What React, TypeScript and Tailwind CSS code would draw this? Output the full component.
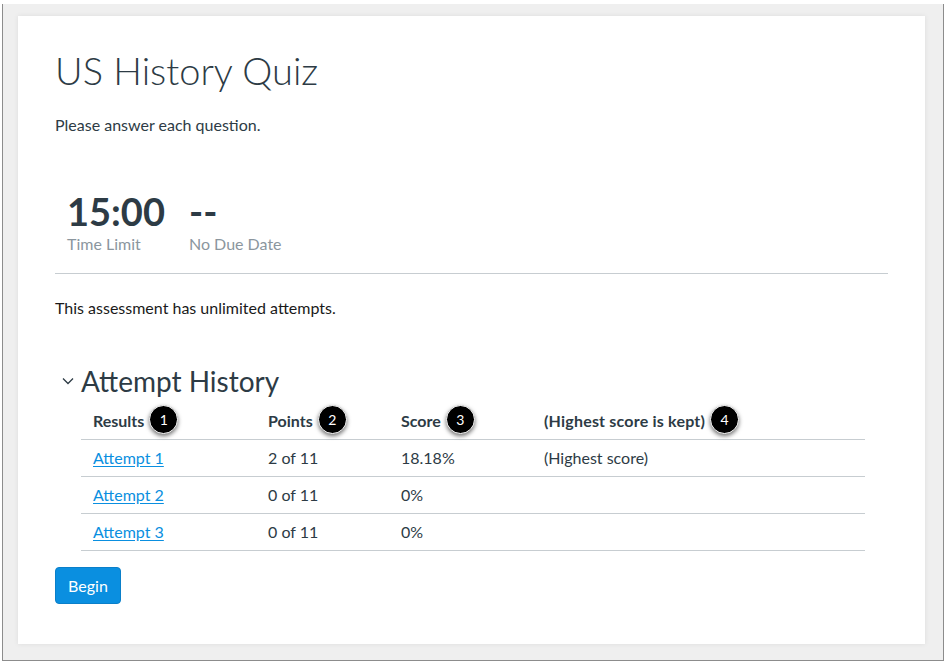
import React from "react";

function Badge({ n }: { n: number }) {
  return (
    <span className="ml-[5px] -mt-[3px] inline-flex h-[29px] w-[29px] items-center justify-center rounded-full border-[1.5px] border-white bg-black text-[14px] font-normal text-white shadow-[0_2px_4px_rgba(0,0,0,0.55)]">
      {n}
    </span>
  );
}

const rows = [
  { a: "Attempt 1", p: "2 of 11", s: "18.18%", h: "(Highest score)" },
  { a: "Attempt 2", p: "0 of 11", s: "0%", h: "" },
  { a: "Attempt 3", p: "0 of 11", s: "0%", h: "" },
];

export default function App() {
  return (
    <div className="h-[666px] w-[945px] bg-white" style={{ fontFamily: "Lato, 'Noto Sans', sans-serif" }}>
      <div className="ml-[2px] mt-[4px] h-[657px] w-[942px] border-x border-b border-[#8c8c8c] bg-[#efefef] pb-[13px] pl-[15px] pr-[16px] pt-[12px]">
        <div className="h-[628px] w-[907px] bg-white pl-[37px] pt-[31px] text-[#2d3b45] shadow-[0_0_5px_rgba(0,0,0,0.08)]">
          <h1 className="text-[38px] font-light leading-[46px] text-[#2d3b45]">US History Quiz</h1>
          <p className="mt-[21px] text-[16px] leading-[22px]">Please answer each question.</p>

          <div className="ml-[12px] mt-[56px] flex gap-[24px]">
            <div>
              <div className="text-[38px] font-bold leading-[38px]">15:00</div>
              <div className="mt-[3px] text-[16px] leading-[22px] text-[#8b969e]">Time Limit</div>
            </div>
            <div>
              <div className="text-[38px] font-bold leading-[38px]">--</div>
              <div className="mt-[3px] text-[16px] leading-[22px] text-[#8b969e]">No Due Date</div>
            </div>
          </div>

          <div className="mt-[18px] h-px w-[833px] bg-[#c7cdd1]" />

          <p className="mt-[23px] text-[16px] leading-[22px] text-[#1a1a1a]">This assessment has unlimited attempts.</p>

          <div className="mt-[45px] flex items-center">
            <svg className="ml-[7px] mr-[7px]" width="12" height="8" viewBox="0 0 12 8" fill="none">
              <path d="M1 1.5 L6 6.5 L11 1.5" stroke="#2d3b45" strokeWidth="1.3" />
            </svg>
            <h2 className="text-[28px] font-normal leading-[34px]">Attempt History</h2>
          </div>

          <div className="ml-[26px] mt-[5px] w-[784px] text-[16px]">
            <div className="grid h-[37px] grid-cols-[175px_133px_143px_1fr] items-center border-b border-[#c7cdd1] font-bold">
              <div className="flex items-center pl-[12px]">Results<Badge n={1} /></div>
              <div className="flex items-center pl-[12px]">Points<Badge n={2} /></div>
              <div className="flex items-center pl-[12px]">Score<Badge n={3} /></div>
              <div className="flex items-center pl-[12px] tracking-[0.2px]">(Highest score is kept)<Badge n={4} /></div>
            </div>
            {rows.map((r) => (
              <div key={r.a} className="grid h-[37px] grid-cols-[175px_133px_143px_1fr] items-center border-b border-[#c7cdd1]">
                <div className="pl-[12px]">
                  <a href="#" className="text-[#0a8fe0] underline underline-offset-2">{r.a}</a>
                </div>
                <div className="pl-[12px]">{r.p}</div>
                <div className="pl-[12px]">{r.s}</div>
                <div className="pl-[12px]">{r.h}</div>
              </div>
            ))}
          </div>

          <button className="mt-[16px] h-[37px] w-[66px] rounded-[4px] border border-[#0a7fc9] bg-[#0a8fe0] text-[16px] text-white">
            Begin
          </button>
        </div>
      </div>
    </div>
  );
}
